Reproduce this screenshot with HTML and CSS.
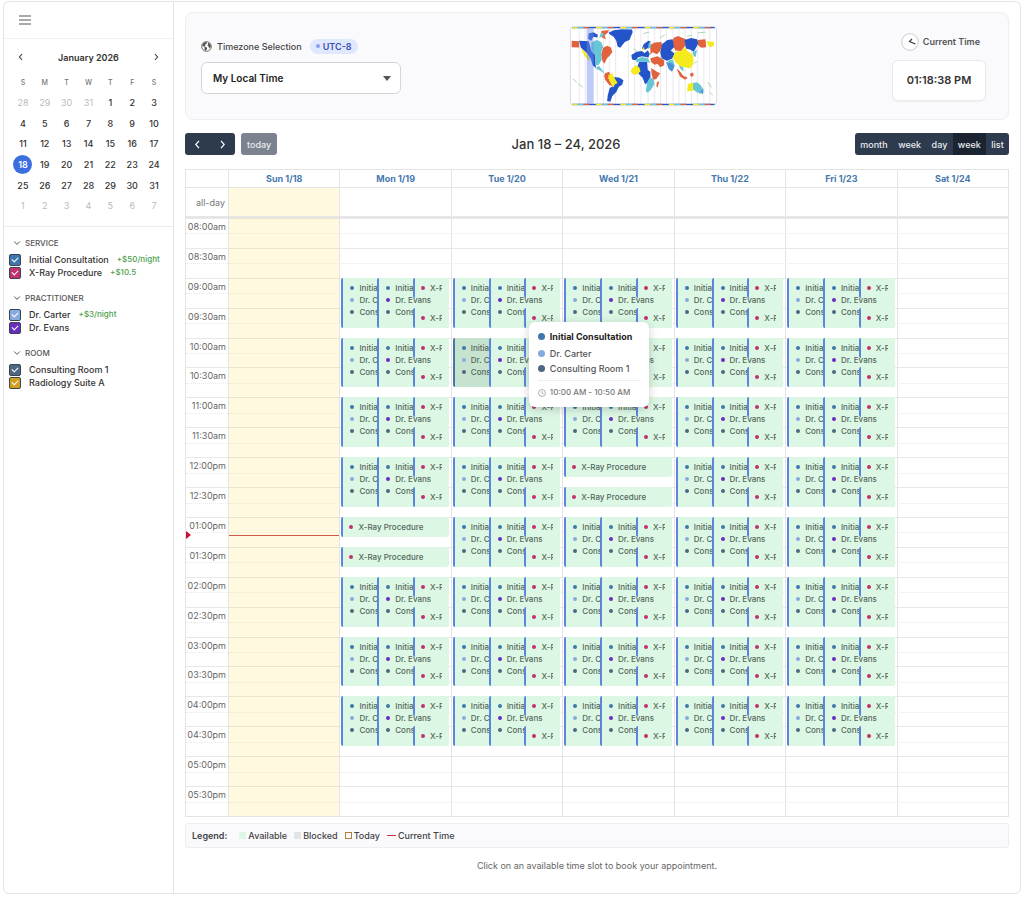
FILE: index.html
```html
<!DOCTYPE html>
<html lang="en">
<head>
<meta charset="utf-8">
<meta name="viewport" content="width=device-width, initial-scale=1">
<title>Booking Calendar</title>
<link rel="stylesheet" href="styles.css">
</head>
<body>
<div class="app">
  <aside class="sidebar">
    <div class="menu-bar">
      <button class="icon-btn" type="button" aria-label="Menu">
        <svg width="12" height="12" viewBox="0 0 12 12" fill="none" stroke="#555" stroke-width="1.2"><path d="M0 2h12M0 6h12M0 10h12"/></svg>
      </button>
    </div>
    <section class="mini">
      <div class="mini-head">
        <button class="icon-btn" type="button" aria-label="Previous month"><svg width="8" height="8" viewBox="0 0 8 8" fill="none" stroke="#444" stroke-width="1.1"><path d="M5 1.2 2.4 4 5 6.8"/></svg></button>
        <strong>January 2026</strong>
        <button class="icon-btn" type="button" aria-label="Next month"><svg width="8" height="8" viewBox="0 0 8 8" fill="none" stroke="#444" stroke-width="1.1"><path d="M3 1.2 5.6 4 3 6.8"/></svg></button>
      </div>
      <div class="mini-grid" id="mini-grid"></div>
    </section>
    <section class="filters">
      <details open class="filter">
        <summary><svg class="chev" viewBox="0 0 8 8"><path d="M1.2 2.5 4 5.4 6.8 2.5"/></svg>SERVICE</summary>
        <label class="check"><input type="checkbox" class="c-consult" checked>Initial Consultation <em>+$50/night</em></label>
        <label class="check"><input type="checkbox" class="c-xray" checked>X-Ray Procedure <em>+$10.5</em></label>
      </details>
      <details open class="filter">
        <summary><svg class="chev" viewBox="0 0 8 8"><path d="M1.2 2.5 4 5.4 6.8 2.5"/></svg>PRACTITIONER</summary>
        <label class="check"><input type="checkbox" class="c-carter" checked>Dr. Carter <em>+$3/night</em></label>
        <label class="check"><input type="checkbox" class="c-evans" checked>Dr. Evans</label>
      </details>
      <details open class="filter">
        <summary><svg class="chev" viewBox="0 0 8 8"><path d="M1.2 2.5 4 5.4 6.8 2.5"/></svg>ROOM</summary>
        <label class="check"><input type="checkbox" class="c-room" checked>Consulting Room 1</label>
        <label class="check"><input type="checkbox" class="c-suite" checked>Radiology Suite A</label>
      </details>
    </section>
  </aside>

  <main class="main">
    <section class="zone-card">
      <div class="zone-pick">
        <div class="zone-label">
          <svg width="11" height="11" viewBox="0 0 22 22"><circle cx="11" cy="11" r="9.6" fill="#fff" stroke="#555" stroke-width="1.8"/><path fill="#555" d="M3 6 8 2l4 1-1 3-3 1 1 3-3 1-3 0zM7 11l5 2 0 3-3 4-2-3zM14 3l4 3 2 5-3 4-2-4-2-2 1-3z"/></svg>
          <label for="zone">Timezone Selection</label>
          <span class="badge"><i></i>UTC-8</span>
        </div>
        <select id="zone" class="zone-select"><option>My Local Time</option></select>
      </div>
      <div class="zone-map">
        <svg width="147" height="80" viewBox="30 34 442 240" preserveAspectRatio="none" role="img" aria-label="World timezone map">
          <rect x="30" y="34" width="442" height="240" fill="#fff"/>
          <g stroke="#d6cde0" stroke-width="1.5"><path d="M55 40V270M73 40V270M110 40V270M129 40V270M147 40V270M166 40V270M205 40V270M224 40V270M243 40V270M265 40V270M285 40V270M303 40V270M321 40V270M341 40V270M359 40V270M378 40V270M397 40V270M416 40V270M435 40V270M453 40V270"/></g>
          <g fill="#e2623e">
            <path d="M32 76 55 78 55 97 32 96zM122 46 146 43 142 52 132 60 137 72 124 66zM128 98 140 92 152 97 156 112 148 122 140 130 132 146 126 140 122 118z"/>
            <path d="M134 176 146 172 150 182 144 192 152 206 156 216 146 212 134 196 131 184z"/>
            <path d="M270 90 285 82 306 80 308 94 300 110 292 118 278 112 272 120 272 104zM342 68 356 62 380 72 378 92 366 108 348 106 340 88zM415 74 440 72 442 96 428 98 418 92z"/>
            <path d="M272 130 294 124 314 136 314 152 302 158 294 148 284 150 274 142zM274 160 292 172 302 176 290 194 280 196 276 180zM292 204 299 200 294 220 290 216zM352 162 362 170 372 184 386 190 378 196 362 186zM392 178 402 174 404 184 396 188z"/>
          </g>
          <g fill="#2455c8">
            <path d="M55 76 84 78 88 92 92 108 104 120 106 160 96 152 90 132 76 112 60 98zM84 54 98 50 112 58 110 66 98 64 92 76 82 70z"/>
            <path d="M144 52 160 44 184 41 216 42 218 50 208 74 194 80 180 98 172 94 168 76 160 64 150 58zM162 188 178 190 190 198 186 212 176 218 168 234 156 246 150 264 140 262 142 244 148 222 162 214z"/>
            <path d="M214 120 230 110 246 108 254 114 264 106 270 116 266 128 246 124 234 128 228 136 216 134zM246 100 252 86 266 76 272 78 268 96 256 104zM238 140 262 142 264 166 272 172 272 188 262 206 256 210 248 190 236 178 232 156z"/>
            <path d="M308 86 324 74 340 72 344 96 334 106 346 116 338 132 322 138 306 130 302 112zM376 74 396 68 414 72 418 84 412 96 404 110 394 104 380 100z"/>
          </g>
          <g fill="#66c6d4">
            <path d="M92 82 108 74 122 80 128 96 122 112 124 134 114 152 104 150 104 120 92 106zM104 160 116 154 126 168 134 178 124 172zM120 54 130 52 128 62 116 68z"/>
            <path d="M228 134 246 126 264 130 272 144 262 142 238 140 230 144zM262 206 272 188 282 196 284 210 274 226 264 236 258 232zM266 86 272 78 274 96 266 102z"/>
            <path d="M356 142 370 152 374 170 364 164zM402 206 414 204 424 212 434 226 426 240 412 234 402 226zM400 112 414 104 410 126 404 124zM324 138 340 134 346 152 336 162z"/>
          </g>
          <path fill="#4a90d8" d="M320 142 338 146 346 154 338 172 328 164zM424 232 434 226 432 242z"/>
          <g fill="#f4ea1e">
            <path d="M60 98 74 112 88 134 84 138 70 122zM144 182 156 176 162 190 172 206 162 212 160 220 152 208 144 192zM214 164 226 152 238 158 242 170 232 180 220 180 212 172z"/>
            <path d="M340 128 348 110 364 108 380 96 384 108 400 118 404 134 402 150 392 162 378 158 366 156 350 144zM386 210 402 204 402 230 384 232zM442 78 466 80 466 92 452 96zM250 96 254 98 252 106 248 104z"/>
          </g>
          <g fill="none" stroke="#7cc48c" stroke-width="2"><path d="M36 194 48 204M52 208 66 220M448 204 458 220M452 234 462 244M416 52 440 50M404 146 414 140M222 100 230 110M300 68 316 58M250 54 268 50M384 62 398 60"/></g>
          <path fill="#6f8cf0" fill-opacity=".45" d="M78 38h21v232H78z"/>
          <path fill="none" stroke="#2455c8" stroke-width="4" d="M32 36H470M32 272H470"/>
          <path fill="none" stroke="#f4ea1e" stroke-width="4" stroke-dasharray="18 56" d="M32 36H470M32 272H470"/>
          <path fill="none" stroke="#e2623e" stroke-width="4" stroke-dasharray="18 56" stroke-dashoffset="-36" d="M32 36H470M32 272H470"/>
          <path fill="none" stroke="#66c6d4" stroke-width="4" stroke-dasharray="18 56" stroke-dashoffset="-18" d="M32 36H470M32 272H470"/>
        </svg>
      </div>
      <div class="clock">
        <div class="clock-label">
          <svg width="18" height="18" viewBox="0 0 18 18" fill="none"><circle cx="9" cy="9" r="8.3" fill="#fff" stroke="#d4d6da" stroke-width="1.2"/><path d="M14.5 11 8.4 8.6 11 6" stroke="#333" stroke-width="1.1"/></svg>
          <span>Current Time</span>
        </div>
        <output class="clock-time">01:18:38 PM</output>
      </div>
    </section>

    <div class="toolbar">
      <div class="tool-left">
        <div class="group">
          <button type="button" class="arrow" aria-label="Previous"><svg width="9" height="9" viewBox="0 0 9 9"><path d="M6 .8 2.8 4.5 6 8.2"/></svg></button>
          <button type="button" class="arrow" aria-label="Next"><svg width="9" height="9" viewBox="0 0 9 9"><path d="M3 .8 6.2 4.5 3 8.2"/></svg></button>
        </div>
        <button type="button" class="today-btn">today</button>
      </div>
      <h1>Jan 18 – 24, 2026</h1>
      <div class="group views">
        <button type="button">month</button>
        <button type="button">week</button>
        <button type="button">day</button>
        <button type="button" class="active">week</button>
        <button type="button">list</button>
      </div>
    </div>

    <section class="cal">
      <div class="cal-row cal-head" id="cal-head"><span></span></div>
      <div class="cal-row cal-allday" id="cal-allday"><span>all-day</span></div>
      <div class="cal-row cal-body" id="cal-body"></div>
    </section>

    <div class="legend">
      <strong>Legend:</strong>
      <span><i class="key key-free"></i>Available</span>
      <span><i class="key key-block"></i>Blocked</span>
      <span><i class="key key-today"></i>Today</span>
      <span><i class="key key-now"></i>Current Time</span>
    </div>
    <p class="hint">Click on an available time slot to book your appointment.</p>
  </main>
</div>

<template id="tip">
  <div class="tip" role="tooltip">
    <strong><i class="dot c-consult"></i>Initial Consultation</strong>
    <span><i class="dot c-carter"></i>Dr. Carter</span>
    <span><i class="dot c-room"></i>Consulting Room 1</span>
    <small><svg width="8" height="8" viewBox="0 0 16 16" fill="none" stroke="#999" stroke-width="1.5"><circle cx="8" cy="8" r="7"/><path d="M8 4v4.5l3 1.5"/></svg>10:00 AM - 10:50 AM</small>
  </div>
</template>
<script src="app.js"></script>
</body>
</html>
```
FILE: app.js
```js
const make = (tag, cls, html = '') => {
  const el = document.createElement(tag);
  if (cls) el.className = cls;
  el.innerHTML = html;
  return el;
};

// Month picker
const mini = document.getElementById('mini-grid');
'SMTWTFS'.split('').forEach(d => mini.append(make('span', 'wd', d)));
for (let i = 0; i < 42; i++) {
  const n = i < 4 ? 28 + i : i < 35 ? i - 3 : i - 34;
  const btn = make('button', i < 4 || i > 34 ? 'out' : n === 18 ? 'sel' : '', n);
  btn.type = 'button';
  mini.append(btn);
}

// Week view
const days = ['Sun 1/18', 'Mon 1/19', 'Tue 1/20', 'Wed 1/21', 'Thu 1/22', 'Fri 1/23', 'Sat 1/24'];
const head = document.getElementById('cal-head');
const allday = document.getElementById('cal-allday');
const body = document.getElementById('cal-body');

const line = (color, text) => `<span class="line"><i class="dot ${color}"></i>${text}</span>`;
const event = (cls, html) => {
  const el = make('button', 'event ' + cls, html);
  el.type = 'button';
  return el;
};
const xray = line('c-xray', 'X-Ray Procedure');
const consult = (color, who) =>
  line('c-consult', 'Initial Consultation') + line(color, who) + line('c-room', 'Consulting Room 1');

for (let i = 0; i < 20; i++) {
  const h = 8 + Math.floor(i / 2);
  const label = String(h > 12 ? h - 12 : h).padStart(2, '0') + (i % 2 ? ':30' : ':00') + (h < 12 ? 'am' : 'pm');
  const row = make('div', 'slot', `<span>${label}</span>`);
  row.style.gridRow = i + 1;
  body.append(row);
}

days.forEach((name, d) => {
  const today = d === 0 ? ' is-today' : '';
  head.append(make('a', '', name));
  head.lastChild.href = '#';
  allday.append(make('div', today));
  const col = make('div', 'day' + today);
  col.style.gridColumn = d + 2;
  if (d > 0 && d < 6) {
    for (let h = 0; h < 8; h++) {
      const single = (d === 1 && h === 4) || (d === 3 && h === 3);
      const block = make('div', 'hour' + (single ? ' single' : ''));
      block.style.gridRow = `${3 + h * 2} / span 2`;
      if (!single) {
        block.append(event('first' + (d === 2 && h === 1 ? ' hover' : ''), consult('c-carter', 'Dr. Carter')));
        block.append(event('second', consult('c-evans', 'Dr. Evans')));
      }
      block.append(event('xray top', xray), event('xray bottom', xray));
      col.append(block);
    }
  }
  if (d === 0) col.append(make('div', 'now-line'));
  if (d === 2) col.append(document.getElementById('tip').content.cloneNode(true));
  body.append(col);
});
body.append(make('div', 'now-arrow'));
```
FILE: styles.css
```css
* { box-sizing: border-box; }
body {
  margin: 0;
  padding: 1px 3px;
  background: #fff;
  color: #333;
  font: 500 9px/13px Inter, "Liberation Sans", sans-serif;
}
button, select, input { font: inherit; color: inherit; margin: 0; }
button { border: 0; padding: 0; background: none; cursor: pointer; }
i, em { font-style: normal; }

.app {
  display: flex;
  min-height: 893px;
  border: 1px solid #e4e4e6;
  border-radius: 6px;
}

/* Sidebar */
.sidebar { flex: 0 0 170px; border-right: 1px solid #e4e4e6; }
.menu-bar { height: 37px; padding: 12px 15px; border-bottom: 1px solid #f0f0f0; }
.icon-btn { display: flex; }
.mini { padding: 9px 8px 10px; border-bottom: 1px solid #ececec; }
.mini-head { display: flex; justify-content: space-between; align-items: center; padding: 0 5px; height: 18px; }
.mini-head strong { font-size: 9px; font-weight: 600; }
.mini-grid {
  display: grid;
  grid-template-columns: repeat(7, 1fr);
  grid-template-rows: repeat(7, 1fr);
  height: 144px;
  margin-top: 6px;
  place-items: center;
}
.mini-grid .wd { font-size: 7px; color: #777; }
.mini-grid button { width: 19px; height: 19px; border-radius: 50%; }
.mini-grid .out { color: #bbb; font-weight: 400; }
.mini-grid .sel { background: #3b6fe0; color: #fff; font-weight: 600; }

.filters { padding: 7px 5px; }
.filter { margin-bottom: 10px; }
.filter summary {
  display: flex;
  align-items: center;
  gap: 4px;
  height: 18px;
  padding: 0 5px 0 4px;
  margin-bottom: 1px;
  list-style: none;
  font-size: 8px;
  color: #555;
}
.chev { width: 8px; height: 8px; fill: none; stroke: #555; stroke-width: 1; }
.check { display: flex; align-items: center; height: 13px; font-size: 9px; }
.check em { margin-left: 8px; font-size: 8px; color: #4da04a; }
.check input {
  appearance: none;
  display: grid;
  place-items: center;
  width: 12px;
  height: 12px;
  margin-right: 8px;
  border: 1px solid #3a4454;
  border-radius: 2px;
}
.check input:checked::before {
  content: "";
  width: 5px;
  height: 3px;
  border: solid #fff;
  border-width: 0 0 1px 1px;
  rotate: -45deg;
  margin-bottom: 2px;
}

.c-consult { background: #3f76ad; }
.c-xray { background: #c2316f; }
.c-carter { background: #86aade; }
.c-evans { background: #6a2bc0; }
.c-room { background: #4d6880; }
.c-suite { background: #cfa01e; }

/* Timezone card */
.main { flex: 1; min-width: 0; padding: 10px 11px; }
.zone-card {
  display: flex;
  align-items: center;
  height: 108px;
  padding: 0 22px 0 15px;
  background: #fafafd;
  border: 1px solid #eeeff3;
  border-radius: 8px;
}
.zone-pick { flex: 0 0 200px; display: grid; }
.zone-label { display: flex; align-items: center; gap: 5px; height: 16px; margin-bottom: 8px; color: #444; }
.badge {
  display: flex;
  align-items: center;
  gap: 3px;
  margin-left: 3px;
  padding: 1px 6px;
  border-radius: 8px;
  background: #dfe8fc;
  color: #3c50b8;
  font-weight: 600;
}
.badge i { width: 4px; height: 4px; border-radius: 50%; background: #8b9cf0; }
.zone-select {
  appearance: none;
  display: block;
  width: 100%;
  height: 32px;
  padding: 0 11px;
  border: 1px solid #d3d5da;
  border-radius: 6px;
  background: #fff;
  font-size: 10px;
  font-weight: 600;
  color: #222;
}
.zone-select, .zone-pick::after { grid-area: 2 / 1; }
.zone-pick::after {
  content: "";
  place-self: center end;
  z-index: 1;
  margin-right: 10px;
  border: 4px solid transparent;
  border-top: 5px solid #555;
  border-bottom: 0;
  pointer-events: none;
}
.zone-map { flex: 1; display: flex; justify-content: center; padding-right: 6px; }
.zone-map svg { border-radius: 4px; border: 1px solid #d9dce4; }
.clock { display: flex; flex-direction: column; align-items: flex-end; gap: 9px; padding-top: 1px; }
.clock-label { display: flex; align-items: center; gap: 4px; padding-right: 6px; font-weight: 600; color: #555; }
.clock-time {
  width: 94px;
  padding: 13px 0;
  border: 1px solid #e9eaee;
  border-radius: 6px;
  background: #fff;
  box-shadow: 0 1px 2px rgba(0, 0, 0, .05);
  text-align: center;
  font-size: 11px;
  font-weight: 600;
}

/* Toolbar */
.toolbar { display: flex; justify-content: space-between; align-items: center; margin: 13px 0 14px; height: 22px; }
.tool-left, .group { display: flex; }
.tool-left { gap: 6px; }
.toolbar button { height: 22px; padding: 0 6px; background: #2e3a4e; color: #e8eaee; font-size: 9px; }
.toolbar .views button { padding: 0 5px; flex: 1 0 auto; }
.views { min-width: 154px; }
.toolbar .arrow { display: grid; place-items: center; width: 25px; }
.arrow svg { fill: none; stroke: #fff; stroke-width: 1.2; }
.group { border-radius: 3px; overflow: hidden; }
.toolbar .today-btn { background: #7b848e; border-radius: 3px; }
.toolbar .active { background: #1b2430; }
.toolbar h1 { margin: 0; font-size: 13px; font-weight: 500; color: #333; }

/* Week grid */
.cal { border: 1px solid #e4e4e4; }
.cal-row { display: grid; grid-template-columns: 42px repeat(7, minmax(0, 1fr)); }
.cal-row > a, .cal-allday > div { border-left: 1px solid #e4e4e4; }
.cal-head { height: 17px; }
.cal-head a { text-align: center; line-height: 17px; color: #4678ae; font-weight: 700; text-decoration: none; }
.cal-allday { height: 31px; border-top: 1px solid #e4e4e4; border-bottom: 2px solid #e6e6e6; }
.cal-allday span { align-self: center; text-align: right; padding-right: 3px; color: #777; font-weight: 400; }
.is-today { background: rgba(255, 220, 40, .15); }
.cal-body { position: relative; grid-template-rows: repeat(20, minmax(0, 1fr)); height: 598px; }
.slot {
  grid-column: 1 / -1;
  display: grid;
  grid-template-rows: minmax(0, 1fr) minmax(0, 1fr);
  border-top: 1px solid #e8e8e8;
}
.slot::after { content: ""; border-top: 1px dotted #eaeaea; }
.slot span { width: 42px; padding-right: 2px; text-align: right; line-height: 16px; color: #666; font-weight: 400; }
.day {
  position: relative;
  grid-row: 1 / -1;
  display: grid;
  grid-template-rows: subgrid;
  border-left: 1px solid #e4e4e4;
}
.hour {
  display: grid;
  grid-template-columns: repeat(3, minmax(0, 1fr));
  grid-template-rows: repeat(6, minmax(0, 1fr));
  margin: 0 2px 0 1px;
}
.event {
  overflow: hidden;
  display: flex;
  flex-direction: column;
  padding: 4px 6px 0 7px;
  border-left: 2px solid #5b86e0;
  border-radius: 2px;
  background: #dcf8e5;
  color: #55665c;
  font-size: 8px;
  line-height: 12px;
  text-align: left;
  white-space: nowrap;
}
.line { display: flex; align-items: center; gap: 5px; }
.line .dot { flex: none; width: 4px; height: 4px; border-radius: 50%; }
.first { grid-area: 1 / 1 / 6 / 4; }
.second { grid-area: 1 / 2 / 6 / 4; }
.xray { padding: 4px 7px 0 6px; }
.xray .line { overflow: hidden; }
.top { grid-area: 1 / 3 / 3 / 4; }
.bottom { grid-area: 4 / 3 / 6 / 4; }
.single .top { grid-area: 1 / 1 / 3 / 4; }
.single .bottom { grid-area: 4 / 1 / 6 / 4; }
.hover { background: #c6e3cf; border-color: #4776a8; }

.now-line { position: absolute; top: 53%; left: 0; right: 0; border-top: 1px solid #d0584a; }
.now-arrow {
  position: absolute;
  top: 53%;
  left: 0;
  translate: 0 -4px;
  border: 4px solid transparent;
  border-left: 5px solid #c8102e;
  border-right: 0;
}

.tip {
  position: absolute;
  z-index: 5;
  top: 104px;
  left: 77px;
  display: flex;
  flex-direction: column;
  width: 120px;
  padding: 7px 9px;
  border-radius: 6px;
  background: #fff;
  box-shadow: 0 2px 10px rgba(0, 0, 0, .2);
  color: #555;
  line-height: 15px;
  white-space: nowrap;
}
.tip > * { display: flex; align-items: center; gap: 5px; }
.tip strong { margin-bottom: 2px; color: #222; font-weight: 700; }
.tip .dot { width: 7px; height: 7px; border-radius: 50%; }
.tip small { margin-top: 4px; padding-top: 4px; border-top: 1px solid #eee; font-size: 8px; color: #777; gap: 4px; }

/* Footer */
.legend {
  display: flex;
  align-items: center;
  gap: 7px;
  height: 25px;
  margin-top: 6px;
  padding: 0 6px;
  border: 1px solid #eceef2;
  border-radius: 3px;
  background: #fafafd;
  color: #444;
}
.legend strong { margin-right: 5px; font-weight: 600; }
.legend span { display: flex; align-items: center; gap: 2px; }
.key { width: 7px; height: 7px; }
.key-free { background: #dcf8e5; }
.key-block { background: #e2e3e5; }
.key-today { border: 1px solid #b08040; }
.key-now { width: 9px; height: 1px; background: #c8303c; }
.hint { margin: 11px 0 0; text-align: center; color: #666; font-weight: 400; }
```
